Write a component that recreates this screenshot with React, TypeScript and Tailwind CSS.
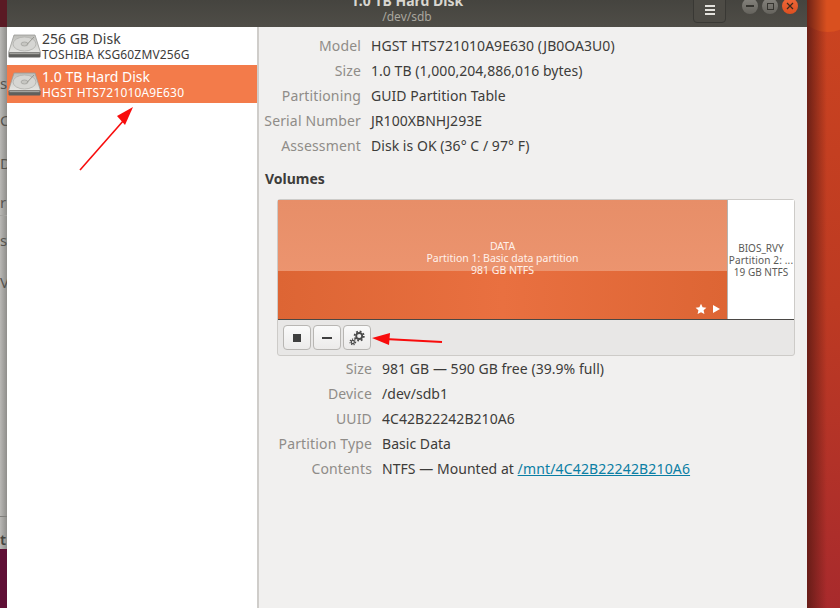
const font = { fontFamily: '"Noto Sans", sans-serif' };

function DiskIcon() {
  return (
    <svg width="33" height="26" viewBox="0 0 33 26" className="shrink-0">
      <defs>
        <linearGradient id="diskTop" x1="0" y1="0" x2="0" y2="1">
          <stop offset="0" stopColor="#bdbdb9" />
          <stop offset="1" stopColor="#e6e6e3" />
        </linearGradient>
      </defs>
      <path d="M6 2h21l5.5 17.5H.5z" fill="url(#diskTop)" stroke="#9b9b97" strokeWidth="0.8" />
      <ellipse cx="16.5" cy="11" rx="11.5" ry="7" fill="#d6d6d3" stroke="#b0b0ac" strokeWidth="0.8" />
      <ellipse cx="16.5" cy="11" rx="3.5" ry="2" fill="#c6c6c2" stroke="#a3a39f" strokeWidth="0.8" />
      <path d="M26 4l-7 7.5" stroke="#96968f" strokeWidth="1" />
      <rect x="0.5" y="19.5" width="32" height="5" rx="1" fill="#5f5f5c" />
      <rect x="1.5" y="20" width="30" height="1.2" fill="#a3a39f" />
    </svg>
  );
}

function Gears() {
  return (
    <svg width="16" height="16" viewBox="0 0 16 16" fill="none" stroke="#4a4a4a">
      <circle cx="10.2" cy="6" r="3" strokeWidth="1.8" />
      <circle cx="10.2" cy="6" r="4.6" strokeWidth="1.8" strokeDasharray="1.8 1.8" />
      <circle cx="3.8" cy="12" r="1.6" strokeWidth="1.2" />
      <circle cx="3.8" cy="12" r="2.8" strokeWidth="1.2" strokeDasharray="1.2 1.2" />
    </svg>
  );
}

function ToolButton({ children }: { children: React.ReactNode }) {
  return (
    <button className="flex h-[25px] w-[28px] items-center justify-center rounded-[4px] border border-[#b8b6b3] bg-gradient-to-b from-[#fafafa] to-[#ecebea]">
      {children}
    </button>
  );
}

function Row({ label, labelW, children }: { label: string; labelW: string; children: React.ReactNode }) {
  return (
    <div className="flex h-[25px] items-center gap-[10px] text-[14px]">
      <span className={`${labelW} shrink-0 whitespace-nowrap text-right tracking-[0.15px] text-[#8f8c88]`}>{label}</span>
      <span className="whitespace-nowrap tracking-[0.04px] text-[#3d3c3a]">{children}</span>
    </div>
  );
}

function DiskItem({ title, sub, selected }: { title: string; sub: string; selected?: boolean }) {
  return (
    <div className={`flex h-[38px] items-center pl-px ${selected ? 'bg-[#f37b4a] text-white' : 'text-[#3d3c3a]'}`}>
      <DiskIcon />
      <div className="ml-px leading-none">
        <div className="text-[14px] leading-[17px]">{title}</div>
        <div className="text-[12px] leading-[15px] tracking-[0.15px]">{sub}</div>
      </div>
    </div>
  );
}

function BackWindowStrip() {
  return (
    <div className="flex w-[7px] shrink-0 flex-col overflow-hidden text-[15px] text-[#55534f]">
      <div className="h-[27px] shrink-0 bg-[#5a1a24]" />
      <div className="flex h-[522px] shrink-0 flex-col bg-gradient-to-r from-[#b9b8b5] to-[#8f8e8b] pt-[35px]">
        <div className="flex h-[42px] shrink-0 items-center">s</div>
        <div className="flex h-[32px] shrink-0 items-center">C</div>
        <div className="flex h-[54px] shrink-0 items-center">D</div>
        <div className="flex h-[26px] shrink-0 items-center border-b border-[#a3a29f]">r</div>
        <div className="flex h-[48px] shrink-0 items-center">s</div>
        <div className="flex h-[36px] shrink-0 items-center">V</div>
        <div className="h-[217px] shrink-0 border-b border-[#807f7c]" />
        <div className="flex h-[32px] shrink-0 items-center pt-[12px] font-semibold text-[#45443f]">t</div>
      </div>
      <div className="flex-1 bg-[#5f0f35]" />
    </div>
  );
}

function Wallpaper() {
  return (
    <div className="relative h-full w-[33px] shrink-0 overflow-hidden bg-gradient-to-b from-[#cb4420] via-[#bd3a22] to-[#a82a2c]">
      <div className="absolute right-[-22px] top-[-36px] h-[68px] w-[68px] rounded-full bg-[#d9501f]" />
      <div className="absolute inset-0 bg-gradient-to-r from-[#5c1a14]/85 to-transparent to-60%" />
    </div>
  );
}

export default function App() {
  return (
    <div className="relative flex h-[608px] w-[840px] overflow-hidden" style={font}>
      <BackWindowStrip />
      <div className="flex w-[800px] shrink-0 flex-col bg-[#f1f0ef]">
        <header className="relative flex h-[27px] shrink-0 items-end justify-center bg-gradient-to-b from-[#45443f] to-[#4f4d47]">
          <div className="mb-[3px] text-center">
            <div className="text-[14px] font-bold leading-[17px] text-[#d8d6d0]">1.0 TB Hard Disk</div>
            <div className="text-[12px] leading-[15px] text-[#a9a69e]">/dev/sdb</div>
          </div>
          <div className="absolute right-[81px] top-[-6px] flex h-[29px] w-[33px] flex-col items-center justify-center gap-[2px] rounded-[4px] border border-[#393834] bg-[#4d4b45] pt-[3px]">
            <span className="h-[2px] w-[10px] bg-[#e3e1dc]" />
            <span className="h-[2px] w-[10px] bg-[#e3e1dc]" />
            <span className="h-[2px] w-[10px] bg-[#e3e1dc]" />
          </div>
          <div className="absolute right-[9px] top-[-2px] flex gap-[4px]">
            <span className="flex h-[16px] w-[16px] items-center justify-center rounded-full bg-gradient-to-b from-[#86847e] to-[#65635d]">
              <span className="h-[1.5px] w-[8px] bg-[#35342f]" />
            </span>
            <span className="flex h-[16px] w-[16px] items-center justify-center rounded-full bg-gradient-to-b from-[#86847e] to-[#65635d]">
              <span className="h-[7px] w-[7px] border border-[#35342f]" />
            </span>
            <span className="flex h-[16px] w-[16px] items-center justify-center rounded-full bg-gradient-to-b from-[#f0683a] to-[#dc4f1f]">
              <svg width="8" height="8" viewBox="0 0 8 8" stroke="#3b2a1c" strokeWidth="1.2">
                <path d="M1 1l6 6M7 1L1 7" />
              </svg>
            </span>
          </div>
        </header>
        <div className="flex min-h-0 flex-1">
          <aside className="w-[250px] shrink-0 bg-white">
            <DiskItem title="256 GB Disk" sub="TOSHIBA KSG60ZMV256G" />
            <DiskItem title="1.0 TB Hard Disk" sub="HGST HTS721010A9E630" selected />
          </aside>
          <div className="w-[2px] shrink-0 bg-[#cfcdca]" />
          <main className="flex-1 pt-[6px]">
            <Row label="Model" labelW="w-[102px]">HGST HTS721010A9E630 (JB0OA3U0)</Row>
            <Row label="Size" labelW="w-[102px]">1.0 TB (1,000,204,886,016 bytes)</Row>
            <Row label="Partitioning" labelW="w-[102px]">GUID Partition Table</Row>
            <Row label="Serial Number" labelW="w-[102px]">JR100XBNHJ293E</Row>
            <Row label="Assessment" labelW="w-[102px]">Disk is OK (36° C / 97° F)</Row>
            <h3 className="ml-[6px] mt-[8px] h-[25px] text-[14px] font-bold leading-[25px] text-[#3d3c3a]">Volumes</h3>
            <div className="ml-[18px] mt-[8px] w-[518px] rounded-[3px] border border-[#cdcbc8] bg-[#e8e7e6]">
              <div className="flex h-[120px] border-b border-[#4a4845]">
                <div className="relative w-[449px] bg-gradient-to-b from-[#e78e68] to-[#ef9873]">
                  <div className="absolute inset-x-0 bottom-0 h-[48px] bg-gradient-to-r from-[#dd6534] via-[#e97040] to-[#dd6534]" />
                  <div className="absolute inset-x-0 top-[40px] text-center text-[10.5px] leading-[12px] text-[#fff1ea]">
                    <div>DATA</div>
                    <div>Partition 1: Basic data partition</div>
                    <div>981 GB NTFS</div>
                  </div>
                  <svg className="absolute bottom-[4px] right-[6px]" width="26" height="12" viewBox="0 0 26 12" fill="#fff">
                    <path d="M6 .8l1.6 3.5 3.8.4-2.8 2.6.8 3.8L6 9.2l-3.4 1.9.8-3.8L.6 4.7l3.8-.4z" />
                    <path d="M18 2l7 4-7 4z" />
                  </svg>
                </div>
                <div className="w-px bg-[#b5b3b0]" />
                <div className="flex flex-1 flex-col justify-center bg-white pt-px text-center text-[10px] leading-[12px] text-[#5a5956]">
                  <div>BIOS_RVY</div>
                  <div className="whitespace-nowrap tracking-[0.15px]">Partition 2: ...</div>
                  <div>19 GB NTFS</div>
                </div>
              </div>
              <div className="flex h-[35px] items-center gap-[2px] pl-[5px]">
                <ToolButton>
                  <span className="h-[8px] w-[8px] bg-[#3f3f3f]" />
                </ToolButton>
                <ToolButton>
                  <span className="h-[2px] w-[10px] bg-[#3f3f3f]" />
                </ToolButton>
                <ToolButton>
                  <Gears />
                </ToolButton>
              </div>
            </div>
            <Row label="Size" labelW="w-[113px]">981 GB — 590 GB free (39.9% full)</Row>
            <Row label="Device" labelW="w-[113px]">/dev/sdb1</Row>
            <Row label="UUID" labelW="w-[113px]">4C42B22242B210A6</Row>
            <Row label="Partition Type" labelW="w-[113px]">Basic Data</Row>
            <Row label="Contents" labelW="w-[113px]">
              NTFS — Mounted at <span className="tracking-[0.15px] text-[#0a7ea4] underline">/mnt/4C42B22242B210A6</span>
            </Row>
          </main>
        </div>
      </div>
      <Wallpaper />
      {/* red annotation arrows */}
      <svg className="pointer-events-none absolute inset-0" width="840" height="608" fill="#f80c0c" stroke="none">
        <path d="M80 170L124 120" stroke="#f80c0c" strokeWidth="1.6" />
        <path d="M133 107L117 116L125 125z" />
        <path d="M442 342L385 339" stroke="#f80c0c" strokeWidth="1.8" />
        <path d="M372 338L390 333L389 345z" />
      </svg>
    </div>
  );
}
